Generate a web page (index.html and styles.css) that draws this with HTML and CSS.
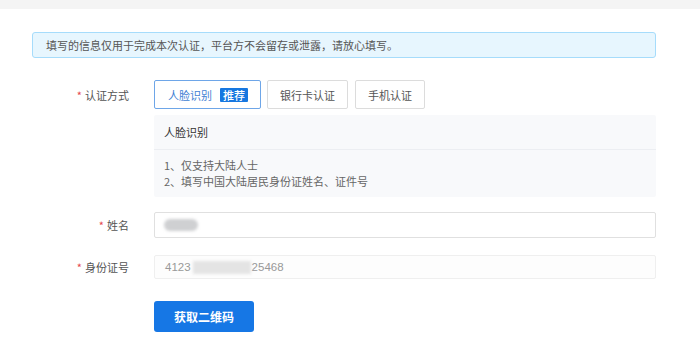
FILE: index.html
```html
<!DOCTYPE html>
<html lang="zh-CN">
<head>
<meta charset="utf-8">
<link rel="stylesheet" href="styles.css">
</head>
<body>
<div class="topband"></div>
<main class="page">
  <div class="alert">填写的信息仅用于完成本次认证，平台方不会留存或泄露，请放心填写。</div>
  <div class="form">
    <div class="row row-method">
      <div class="label"><span class="req">*</span>认证方式</div>
      <div class="field">
        <div class="tabs">
          <button class="tab active">人脸识别<span class="badge">推荐</span></button>
          <button class="tab">银行卡认证</button>
          <button class="tab">手机认证</button>
        </div>
      </div>
    </div>
    <div class="row row-info">
      <div class="label"></div>
      <div class="field">
        <div class="info">
          <div class="info-head">人脸识别</div>
          <div class="info-body">
            <div>1、仅支持大陆人士</div>
            <div>2、填写中国大陆居民身份证姓名、证件号</div>
          </div>
        </div>
      </div>
    </div>
    <div class="row row-name">
      <div class="label"><span class="req">*</span>姓名</div>
      <div class="field">
        <div class="input"><span class="blur blur-name"></span></div>
      </div>
    </div>
    <div class="row row-id">
      <div class="label"><span class="req">*</span>身份证号</div>
      <div class="field">
        <div class="input input-disabled"><span class="val">4123</span><span class="blur blur-id"></span><span class="val">25468</span></div>
      </div>
    </div>
    <div class="row row-submit">
      <div class="label"></div>
      <div class="field">
        <button class="submit">获取二维码</button>
      </div>
    </div>
  </div>
</main>
</body>
</html>
```
FILE: styles.css
```css
* { box-sizing: border-box; }
html, body { margin: 0; padding: 0; background: #fff; }
body {
  font-family: "Noto Sans CJK SC", "Liberation Sans", sans-serif;
  font-size: 11px;
  color: #555;
}
.topband { height: 9px; background: #f4f4f4; }
.page { padding: 23px 44px 0 32px; }
.alert {
  height: 26px;
  line-height: 24px;
  padding: 0 13px;
  background: #e7f6fe;
  border: 1px solid #a6dcfb;
  border-radius: 3px;
  color: #555;
}
.form { margin-top: 22px; }
.row {
  display: grid;
  grid-template-columns: 97px 1fr;
  column-gap: 25px;
  align-items: center;
}
.label { text-align: right; color: #555; font-size: 11px; }
.req { color: #e5484d; margin-right: 3px; }
.tabs { display: flex; gap: 6px; }
.tab {
  height: 29px;
  padding: 0 12px;
  border: 1px solid #dcdcdc;
  border-radius: 2px;
  background: #fff;
  font-family: inherit;
  font-size: 11px;
  color: #555;
  display: flex;
  align-items: center;
}
.tab.active { border-color: #6ea6e8; color: #3f7fd4; padding-left: 13px; }
.badge {
  margin-left: 8px;
  background: #1677e0;
  color: #fff;
  font-size: 11px;
  line-height: 14px;
  height: 14px;
  padding: 0 3px;
  border-radius: 1px;
  font-weight: 500;
}
.tabs .tab:nth-child(2) { width: 81px; justify-content: center; padding: 0; }
.tabs .tab:nth-child(3) { width: 70px; justify-content: center; padding: 0; margin-left: 1px; }
.row-info { margin-top: 6px; }
.info { background: #f8f9fb; border-radius: 2px; }
.info-head {
  height: 35px;
  line-height: 35px;
  padding-left: 10px;
  color: #333;
  border-bottom: 1px solid #eceef2;
}
.info-body { padding: 7px 10px 8px; line-height: 16px; color: #666; }
.row-name { margin-top: 15px; }
.input {
  height: 26px;
  border: 1px solid #e0e0e0;
  border-radius: 2px;
  background: #fff;
  display: flex;
  align-items: center;
  padding-left: 10px;
  color: #999;
  font-size: 11.5px;
}
.input-disabled { height: 24px; border-color: #efefef; background: #fdfdfd; }
.row-id { margin-top: 17px; }
.blur { display: inline-block; background: #d8d8d8; filter: blur(1.5px); }
.blur-name { width: 34px; height: 12px; border-radius: 6px; margin-left: -1px; background: #cfd0d2; }
.blur-id { width: 58px; height: 13px; margin: 0 1px 0 2px; background: #e4e4e4; }
.val { color: #999; font-family: "Liberation Sans", sans-serif; }
.row-submit { margin-top: 22px; }
.submit {
  width: 100px;
  height: 31px;
  border: 0;
  border-radius: 3px;
  background: #1677e5;
  color: #fff;
  font-family: inherit;
  font-size: 12px;
  font-weight: 700;
}
```
